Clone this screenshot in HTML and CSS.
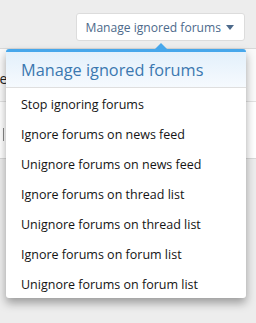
FILE: index.html
```html
<!DOCTYPE html>
<html lang="en">
<head>
    <meta charset="UTF-8">
    <meta name="viewport" content="width=device-width, initial-scale=1.0">
    <title>Manage ignored forums</title>
    <link rel="stylesheet" href="styles.css">
</head>
<body>
    <div class="page">
        <div class="toolbar">
            <button class="button-menu">Manage ignored forums <span class="caret"></span></button>
        </div>

        <div class="block">
            <div class="block-header"><span class="block-title">Forum title</span></div>
            <div class="block-row"><span class="sep"></span></div>
        </div>

        <div class="menu">
            <span class="menu-arrow"></span>
            <h3 class="menu-header">Manage ignored forums</h3>
            <a class="menu-link" href="#">Stop ignoring forums</a>
            <a class="menu-link" href="#">Ignore forums on news feed</a>
            <a class="menu-link" href="#">Unignore forums on news feed</a>
            <a class="menu-link" href="#">Ignore forums on thread list</a>
            <a class="menu-link" href="#">Unignore forums on thread list</a>
            <a class="menu-link" href="#">Ignore forums on forum list</a>
            <a class="menu-link" href="#">Unignore forums on forum list</a>
        </div>
    </div>
</body>
</html>
```

FILE: styles.css
```css
body {
    margin: 0;
    padding: 0;
    background-color: #ededed;
    font-family: "Open Sans", "Noto Sans", sans-serif;
}
.page {
    position: relative;
    height: 323px;
    overflow: hidden;
}
.toolbar {
    display: flex;
    justify-content: flex-end;
    padding: 13px 11px 0 0;
}
.button-menu {
    display: flex;
    align-items: center;
    gap: 5px;
    height: 28px;
    padding: 1px 10px 0 9px;
    background-color: #fff;
    border: 1px solid #dcdcdc;
    border-radius: 3px;
    color: #4d6a8b;
    font-family: inherit;
    font-size: 12.1px;
}
.caret {
    width: 0;
    height: 0;
    border-left: 4px solid transparent;
    border-right: 4px solid transparent;
    border-top: 5px solid #4d6a8b;
}

/* content behind the menu */
.block {
    margin: 7px 0 0 -60px;
    background-color: #fafafa;
    border-top: 1px solid #d8d8d8;
    border-bottom: 1px solid #d8d8d8;
}
.block-header {
    height: 46px;
    padding-top: 6px;
    display: flex;
    align-items: center;
    border-bottom: 1px solid #e2e2e2;
    font-size: 14px;
    color: #222;
}
.block-title {
    margin-left: -4px;
}
.block-row {
    height: 56px;
    display: flex;
    align-items: center;
    background-color: #fff;
}
.sep {
    margin: 8px 0 0 63px;
    width: 1px;
    height: 13px;
    background-color: #888;
}

/* popup menu */
.menu {
    position: absolute;
    top: 49px;
    left: 6px;
    width: 240px;
    background-color: #fff;
    border-top: 3px solid #47a7eb;
    border-radius: 3px;
    box-shadow: 0 5px 10px rgba(0, 0, 0, 0.35);
}
.menu-arrow {
    position: absolute;
    top: -9px;
    left: 149px;
    width: 0;
    height: 0;
    border-left: 6px solid transparent;
    border-right: 6px solid transparent;
    border-bottom: 6px solid #47a7eb;
}
.menu-header {
    margin: 0;
    height: 34px;
    padding: 1px 15px 0;
    line-height: 35px;
    font-size: 16.3px;
    font-weight: normal;
    color: #3b78b0;
    background: linear-gradient(to bottom, #e3f0fb, #f6fafe);
    border-bottom: 1px solid #dfdfdf;
}
.menu-link {
    display: block;
    height: 28px;
    padding: 2px 15px 0;
    line-height: 30px;
    font-size: 12.5px;
    color: #141414;
    text-decoration: none;
}
```
